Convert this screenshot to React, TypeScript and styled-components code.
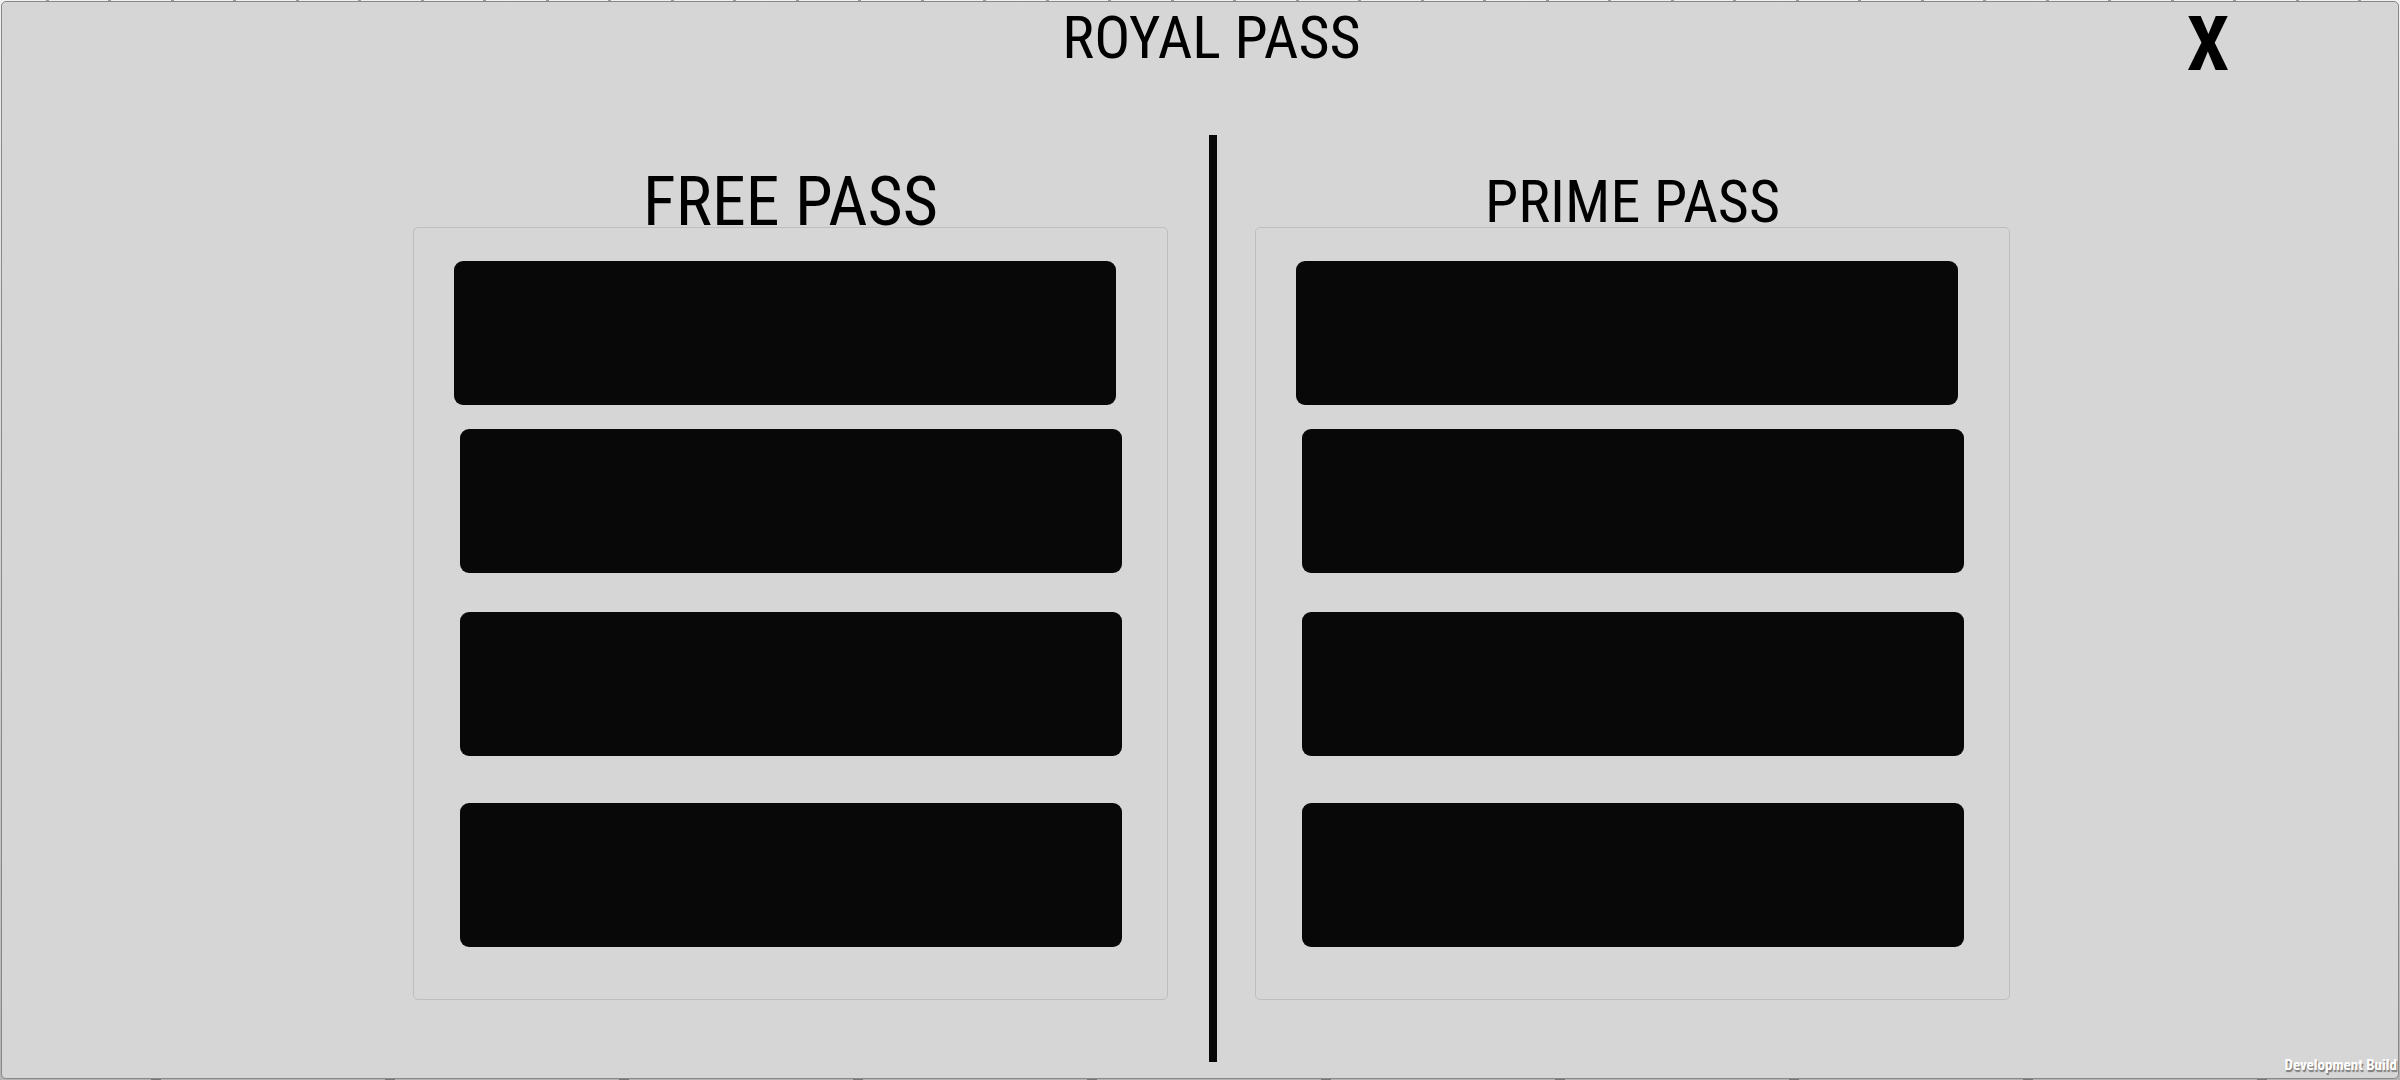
import React from "react";
import styled, { createGlobalStyle } from "styled-components";

const narrow = `"Roboto Condensed", "Open Sans Condensed", "DejaVu Sans Condensed", sans-serif`;

const GlobalStyle = createGlobalStyle`
  *, *::before, *::after { box-sizing: border-box; }
  body { margin: 0; background: #d6d6d6; }
`;

const Backdrop = styled.div`
  display: flex;
  min-height: 100vh;
  padding: 1px;
  background:
    repeating-linear-gradient(90deg, transparent 0 151px, #777 151px 161px, transparent 161px 234px) bottom / 100% 1px no-repeat,
    repeating-linear-gradient(90deg, transparent 0 46px, #999 46px 49px, transparent 49px 108px, #999 108px 111px, transparent 111px 125px) top / 100% 1px no-repeat,
    linear-gradient(#f0f0f0, #b4b4b4);
`;

const Panel = styled.main`
  flex: 1;
  display: flex;
  flex-direction: column;
  border: 1px solid #888;
  border-radius: 5px;
  background: #d6d6d6;
  color: #000;
  font-family: ${narrow};
`;

const columns = `411fr 755fr 41fr 8px 38fr 755fr 388fr`;

const Header = styled.header`
  display: grid;
  grid-template-columns: ${columns};
  height: 133px;
`;

const Title = styled.h1`
  grid-column: 2 / 7;
  grid-row: 1;
  justify-self: center;
  margin: 0;
  font-size: 60px;
  font-weight: 400;
  line-height: 72px;
  white-space: nowrap;
`;

const CloseButton = styled.button`
  grid-column: 7;
  grid-row: 1;
  justify-self: center;
  align-self: start;
  padding: 0 0 0 8px;
  border: 0;
  background: none;
  color: #000;
  font-family: ${narrow};
  font-size: 76px;
  font-weight: 700;
  line-height: 84px;
  cursor: pointer;
`;

const Passes = styled.div`
  flex: 1;
  display: grid;
  grid-template-columns: ${columns};
  padding-bottom: 16px;
`;

const Divider = styled.div`
  grid-column: 4;
  grid-row: 1;
  background: #080808;
`;

const Pass = styled.section<{ $column: number }>`
  grid-column: ${({ $column }) => $column};
  grid-row: 1;
  display: flex;
  flex-direction: column;
  padding-bottom: 62px;
`;

const PassTitle = styled.h2<{ $size: number }>`
  height: 92px;
  margin: 0;
  font-size: ${({ $size }) => $size}px;
  font-weight: 400;
  line-height: 134px;
  text-align: center;
  white-space: nowrap;
`;

const Rewards = styled.ul`
  flex: 1;
  margin: 0;
  padding: 33px 45px 52px 40px;
  border: 1px solid #bebebe;
  border-radius: 5px;
  list-style: none;
`;

const Reward = styled.li<{ $gap: number; $lead?: boolean }>`
  height: 144px;
  margin: ${({ $gap }) => $gap}px ${({ $lead }) => ($lead ? "6px 0 0" : "0 0 6px")};
  border-radius: 9px;
  background: #080808;
`;

const BuildTag = styled.small`
  position: absolute;
  right: 3px;
  bottom: 5px;
  color: #fff;
  font: 700 15px/20px ${narrow};
  text-shadow: 1px 2px 1px #777;
`;

const gaps = [0, 24, 39, 47];

const passes = [
  { name: "FREE PASS", column: 2, size: 68 },
  { name: "PRIME PASS", column: 6, size: 60 },
];

export default function App() {
  return (
    <Backdrop>
      <GlobalStyle />
      <Panel>
        <Header>
          <Title>ROYAL PASS</Title>
          <CloseButton type="button" aria-label="Close">X</CloseButton>
        </Header>
        <Passes>
          <Divider />
          {passes.map((pass) => (
            <Pass key={pass.name} $column={pass.column}>
              <PassTitle $size={pass.size}>{pass.name}</PassTitle>
              <Rewards>
                {gaps.map((gap, i) => (
                  <Reward key={i} $gap={gap} $lead={i === 0} />
                ))}
              </Rewards>
            </Pass>
          ))}
        </Passes>
      </Panel>
      <BuildTag>Development Build</BuildTag>
    </Backdrop>
  );
}
